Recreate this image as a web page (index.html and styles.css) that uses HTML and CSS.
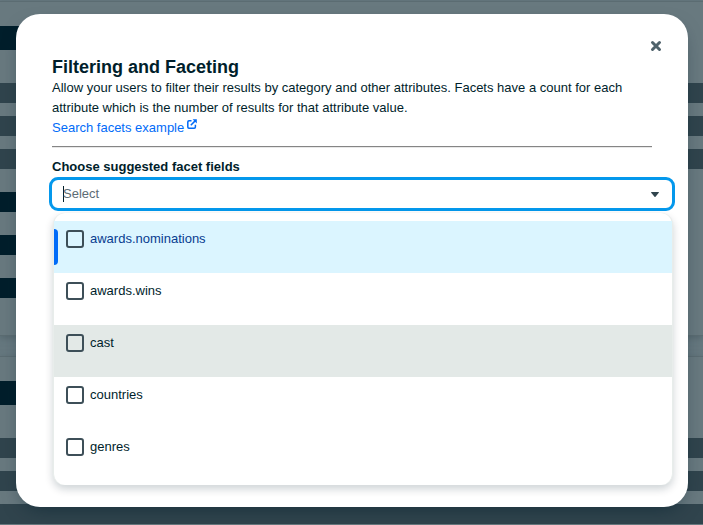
FILE: index.html
```html
<!DOCTYPE html>
<html lang="en">
<head>
<meta charset="utf-8">
<meta name="viewport" content="width=device-width, initial-scale=1">
<title>Filtering and Faceting</title>
<link rel="stylesheet" href="styles.css">
</head>
<body>
<div class="page" aria-hidden="true">
  <div class="card">
    <div class="bar title"></div>
    <div class="lines"><div class="bar"></div><div class="bar"></div><div class="bar"></div></div>
    <div class="labels"><div class="bar dark"></div><div class="bar dark"></div><div class="bar dark"></div></div>
  </div>
  <div class="card">
    <div class="bar title"></div>
    <div class="lines"><div class="bar"></div><div class="bar"></div><div class="bar"></div></div>
  </div>
</div>
<main class="modal" role="dialog" aria-labelledby="modal-title">
  <button class="close" type="button" aria-label="Close">
    <svg viewBox="0 0 12 12" width="12" height="12"><path d="M2.5 2.5 9.5 9.5M9.5 2.5 2.5 9.5" fill="none" stroke="currentColor" stroke-width="3" stroke-linecap="round"/></svg>
  </button>
  <h1 id="modal-title">Filtering and Faceting</h1>
  <p>Allow your users to filter their results by category and other attributes. Facets have a count for each attribute which is the number of results for that attribute value.</p>
  <a class="example" href="#example">Search facets example<svg viewBox="0 0 10 10" width="10" height="10"><path d="M4.5 1.7H2Q.8 1.7.8 2.9V8Q.8 9.2 2 9.2H7.2Q8.4 9.2 8.4 8V5.7M3.8 6.2 8.6 1.4" fill="none" stroke="currentColor" stroke-width="1.5"/><path d="M5.6.2H9.8V4.4Z" fill="currentColor"/></svg></a>
  <hr>
  <label class="field-label" for="facet-fields">Choose suggested facet fields</label>
  <div class="combobox">
    <span class="caret"></span>
    <input id="facet-fields" type="text" role="combobox" aria-expanded="true" aria-controls="facet-options" placeholder="Select">
    <svg class="arrow" viewBox="0 0 8 5" width="8" height="5"><path d="M.5 0H7.5Q8.2.2 7.8.8L4.5 4.7Q4 5.2 3.5 4.7L.2.8Q-.2.2.5 0Z" fill="currentColor"/></svg>
  </div>
  <div class="options" id="facet-options">
    <label class="option active"><input type="checkbox"><span>awards.nominations</span></label>
    <label class="option"><input type="checkbox"><span>awards.wins</span></label>
    <label class="option hovered"><input type="checkbox"><span>cast</span></label>
    <label class="option"><input type="checkbox"><span>countries</span></label>
    <label class="option"><input type="checkbox"><span>genres</span></label>
  </div>
</main>
</body>
</html>
```
FILE: styles.css
```css
* {
  box-sizing: border-box;
}

body {
  margin: 0;
  height: 100vh;
  overflow: hidden;
  display: grid;
  grid-template-columns: minmax(0, 1fr);
  align-items: start;
  background: #66787f;
  color: #001e2b;
  font: 13px/20px "Liberation Sans", Arial, sans-serif;
}

/* Dimmed page behind the dialog */
.page,
.modal {
  grid-area: 1 / 1;
}

.page {
  height: 100vh;
  overflow: hidden;
  padding-top: 1px;
}

.card {
  margin-bottom: 20px;
  padding: 24px 0 37px;
  border-top: 1px solid #5b6c72;
  border-bottom: 1px solid #5b6c72;
  background: #68797f;
  box-shadow: 0 2px 6px #55676e;
}

.bar {
  height: 20px;
  background: #30444d;
}

.bar.title {
  width: 50%;
  height: 24px;
  margin-bottom: 33px;
  background: #001e2b;
}

.bar.dark {
  width: 50%;
  background: #001e2b;
}

.lines {
  display: grid;
  gap: 13px;
}

.labels {
  display: grid;
  gap: 23px;
  margin-top: 23px;
}

/* Dialog */
.modal {
  position: relative;
  margin: 14px 15px 0 16px;
  padding: 42px 36px 22px;
  border-radius: 24px;
  background: #fff;
  box-shadow: 0 8px 20px -8px rgba(0, 30, 43, 0.6);
}

.close {
  position: absolute;
  top: 22px;
  right: 22px;
  display: grid;
  place-items: center;
  width: 20px;
  height: 20px;
  padding: 0;
  border: 0;
  background: none;
  color: #4f626b;
}

h1 {
  margin: 0;
  font-size: 18px;
  line-height: 22px;
}

p {
  margin: 0;
}

.example {
  display: flex;
  gap: 3px;
  color: #016bf8;
  text-decoration: none;
}

.example svg {
  margin-top: 1px;
}

hr {
  margin: 8px 0;
  border: 0;
  border-top: 1px solid #858585;
  border-bottom: 1px solid #e8e8e8;
}

.field-label {
  display: block;
  margin-top: 9px;
  font-weight: bold;
}

.combobox {
  display: flex;
  align-items: center;
  height: 34px;
  margin: 0 -23px 0 -3px;
  padding: 0 13px 0 11px;
  border: 3px solid #0498ec;
  border-radius: 9px;
}

.caret {
  width: 1px;
  height: 16px;
  margin-right: -1px;
  background: #001e2b;
}

.combobox input {
  flex: 1;
  min-width: 0;
  padding: 0;
  border: 0;
  outline: 0;
  background: none;
  color: inherit;
  font: inherit;
}

.combobox input::placeholder {
  color: #5c6c75;
  opacity: 1;
}

.arrow {
  color: #30444d;
}

.options {
  margin: 2px -21px 0 1px;
  padding: 8px 0 4px;
  border: 0 solid #e8edeb;
  border-width: 0 1px;
  border-radius: 12px;
  background: #fff;
  box-shadow: 0 0 1px #e8edeb, 0 4px 8px rgba(0, 30, 43, 0.2);
}

.option {
  position: relative;
  display: flex;
  align-items: flex-start;
  gap: 6px;
  height: 52px;
  padding: 8px 12px;
}

.option.active {
  background: #dbf5ff;
  color: #083c90;
}

.option.active::before {
  content: "";
  position: absolute;
  top: 8px;
  bottom: 8px;
  left: 0;
  width: 4px;
  border-radius: 0 4px 4px 0;
  background: #016bf8;
}

.option.hovered {
  background: #e3e9e7;
}

.option input {
  appearance: none;
  width: 18px;
  height: 18px;
  margin: 1px 0 0;
  border: 2px solid #3d4f58;
  border-radius: 3px;
}
```
